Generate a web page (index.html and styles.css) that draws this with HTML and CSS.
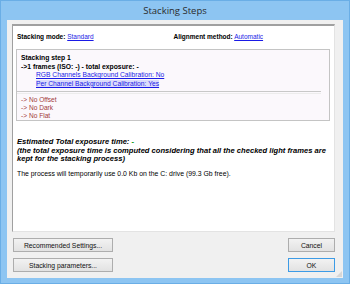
FILE: index.html
```html
<!DOCTYPE html>
<html lang="en">
<head>
  <meta charset="UTF-8">
  <title>Stacking Steps</title>
  <link rel="stylesheet" href="styles.css">
</head>
<body>
<div class="window">
  <div class="titlebar">Stacking Steps</div>
  <div class="client">
    <div class="panel">
      <div class="modes">
        <div class="mode"><b>Stacking mode:</b> <a href="#">Standard</a></div>
        <div class="mode align"><b>Alignment method:</b> <a href="#">Automatic</a></div>
      </div>

      <div class="step">
        <div class="step-head">
          <b>Stacking step 1</b>
          <b>-&gt;1 frames (ISO: -) - total exposure: -</b>
          <a href="#" class="sub">RGB Channels Background Calibration: No</a>
          <a href="#" class="sub hl">Per Channel Background Calibration: Yes</a>
        </div>
        <div class="sep"></div>
        <div class="missing">
          <span>-&gt; No Offset</span>
          <span>-&gt; No Dark</span>
          <span>-&gt; No Flat</span>
        </div>
      </div>

      <div class="estimate">
        <div>Estimated Total exposure time: <span class="green">-</span></div>
        <div>(the total exposure time is computed considering that all the checked light frames are</div>
        <div>kept for the stacking process)</div>
      </div>

      <p class="disk">The process will temporarily use 0.0 Kb on the C: drive (99.3 Gb free).</p>
    </div>

    <div class="buttons">
      <div class="col">
        <button type="button" class="wide">Recommended Settings...</button>
        <button type="button" class="wide">Stacking parameters...</button>
      </div>
      <div class="col">
        <button type="button" class="small">Cancel</button>
        <button type="button" class="small default">OK</button>
      </div>
    </div>
    <div class="grip"></div>
  </div>
</div>
</body>
</html>
```

FILE: styles.css
```css
body {
  margin: 0;
  font-family: "Liberation Sans", Arial, sans-serif;
}
.window {
  width: 350px;
  height: 284px;
  box-sizing: border-box;
  background: #8dc5f2;
  border: 1px solid #6aaee6;
  padding: 0 6px 5px;
  display: flex;
  flex-direction: column;
}
.titlebar {
  height: 19px;
  display: flex;
  align-items: center;
  justify-content: center;
  font-family: "Open Sans", sans-serif;
  font-size: 9.5px;
  color: #2b2b2b;
}
.client {
  flex: 1;
  background: #f0f0f0;
  padding: 4px 8px 6px 5px;
  display: flex;
  flex-direction: column;
  position: relative;
}
.panel {
  height: 208px;
  box-sizing: border-box;
  background: #fff;
  border-top: 2px solid #a0a0a0;
  border-left: 1px solid #a0a0a0;
  border-right: 1px solid #e3e3e3;
  border-bottom: 1px solid #e3e3e3;
  padding: 6px 4px 0 4px;
  font-size: 6.9px;
  color: #000;
}
.modes {
  display: flex;
  height: 9px;
  align-items: center;
  font-size: 6.5px;
}
.mode {
  width: 158px;
}
a {
  color: #1a1ae6;
}
.step {
  margin: 8px 0 0 -1px;
  width: 314px;
  box-sizing: border-box;
  border: 1px solid #c4c4c4;
  background: #fbf8fc;
  padding: 4px 4px 0 4px;
}
.step-head {
  display: flex;
  flex-direction: column;
  line-height: 8.6px;
}
.step-head b {
  font-size: 6.8px;
}
.sub {
  margin-left: 15px;
  align-self: flex-start;
  font-size: 6.7px;
}
.hl {
  background: #dcdcfb;
}
.sep {
  height: 1px;
  margin: 3px 4px 2px -4px;
  border-top: 1px solid #c8c8c8;
  border-bottom: 1px solid #ececec;
}
.missing {
  display: flex;
  flex-direction: column;
  line-height: 8px;
  font-size: 6.6px;
  color: #a23a3a;
}
.estimate {
  margin-top: 17px;
  font-weight: bold;
  font-style: italic;
  font-size: 7.6px;
  line-height: 8.5px;
}
.green {
  color: #22a022;
}
.disk {
  margin: 6px 0 0;
}
.buttons {
  display: flex;
  justify-content: space-between;
  margin-top: 6px;
}
.col {
  display: flex;
  flex-direction: column;
  gap: 6px;
}
button {
  height: 14px;
  box-sizing: border-box;
  padding: 0;
  border: 1px solid #adadad;
  background: linear-gradient(#f2f2f2, #e2e2e2);
  font-family: "Liberation Sans", Arial, sans-serif;
  font-size: 6.8px;
  color: #111;
}
.wide {
  width: 100px;
  margin-left: 1px;
}
.small {
  width: 47px;
}
.default {
  border-color: #3c9be6;
}
.grip {
  position: absolute;
  right: 1px;
  bottom: 1px;
  width: 6px;
  height: 6px;
  background: radial-gradient(circle, #b8b8b8 0.6px, transparent 0.8px) 0 0 / 2px 2px;
  clip-path: polygon(100% 0, 100% 100%, 0 100%);
}
```
